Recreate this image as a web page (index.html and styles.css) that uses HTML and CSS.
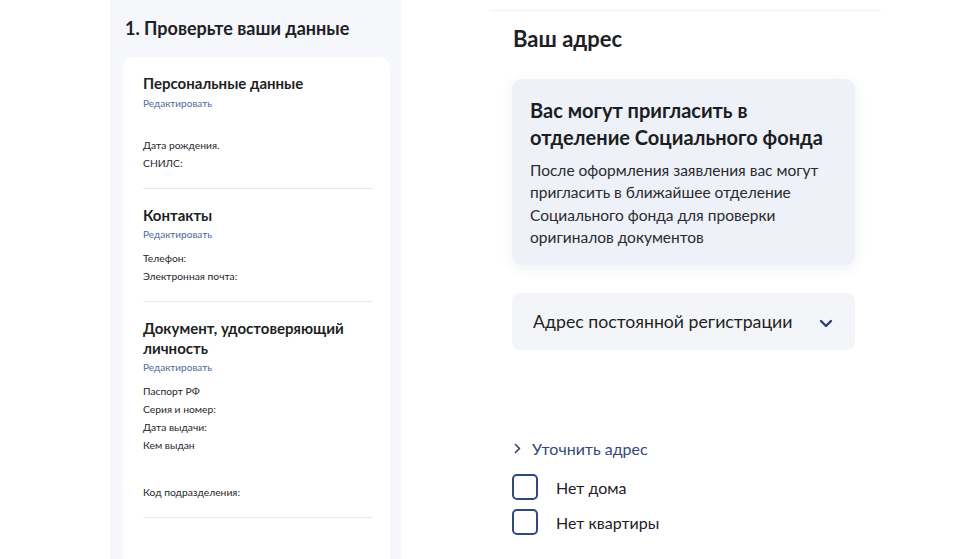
FILE: index.html
```html
<!DOCTYPE html>
<html lang="ru">
<head>
<meta charset="UTF-8">
<title>Проверьте ваши данные</title>
<link rel="stylesheet" href="styles.css">
</head>
<body>
<div class="page">
    <div class="left">
        <h1 class="step-title">1. Проверьте ваши данные</h1>
        <div class="card">
            <div class="sec">
                <h2 class="sec-title">Персональные данные</h2>
                <a class="edit">Редактировать</a>
                <div class="fields first">
                    <p>Дата рождения.</p>
                    <p>СНИЛС:</p>
                </div>
            </div>
            <div class="sec">
                <h2 class="sec-title">Контакты</h2>
                <a class="edit">Редактировать</a>
                <div class="fields">
                    <p>Телефон:</p>
                    <p>Электронная почта:</p>
                </div>
            </div>
            <div class="sec">
                <h2 class="sec-title">Документ, удостоверяющий личность</h2>
                <a class="edit">Редактировать</a>
                <div class="fields">
                    <p>Паспорт РФ</p>
                    <p>Серия и номер:</p>
                    <p>Дата выдачи:</p>
                    <p>Кем выдан</p>
                    <p class="code">Код подразделения:</p>
                </div>
            </div>
            <div class="sec last"></div>
        </div>
    </div>
    <div class="right">
        <div class="right-inner">
            <h1 class="addr-title">Ваш адрес</h1>
            <div class="info">
                <h3>Вас могут пригласить в отделение Социального фонда</h3>
                <p>После оформления заявления вас могут пригласить в ближайшее отделение Социального фонда для проверки оригиналов документов</p>
            </div>
            <div class="select">
                <span>Адрес постоянной регистрации</span>
                <svg width="14" height="9" viewBox="0 0 14 9"><path d="M2 2l5 5 5-5" fill="none" stroke="#2c3f73" stroke-width="2.4" stroke-linecap="round" stroke-linejoin="round"/></svg>
            </div>
            <div class="refine">
                <svg width="7" height="11" viewBox="0 0 7 11"><path d="M1.5 1.5l4 4-4 4" fill="none" stroke="#2c3f73" stroke-width="1.6" stroke-linecap="round" stroke-linejoin="round"/></svg>
                <span>Уточнить адрес</span>
            </div>
            <label class="check"><span class="box"></span>Нет дома</label>
            <label class="check"><span class="box"></span>Нет квартиры</label>
        </div>
    </div>
</div>
</body>
</html>
```
FILE: styles.css
```css
*{margin:0;padding:0;box-sizing:border-box;}
body{background:#fff;font-family:Lato,"Noto Sans",sans-serif;color:#1f2026;}
.page{display:flex;height:559px;overflow:hidden;padding-left:110px;}

.left{width:291px;background:#f6f7fb;padding:17px 11px 0 13px;}
.step-title{font-size:18px;font-weight:700;line-height:22px;padding-left:2px;}
.card{margin-top:18px;background:#fff;border-radius:10px;padding:0 17px 0 20px;height:600px;}
.sec{padding:17px 0 16px;border-bottom:1px solid #e6e8ec;}
.sec.last{border:none;}
.sec-title{font-size:15px;font-weight:700;line-height:19.5px;color:#1e1f24;}
.edit{display:block;margin-top:2px;font-size:10px;line-height:14px;color:#4c6a99;}
.fields{margin-top:8px;font-size:10.3px;line-height:18px;color:#26272c;}
.fields.first{margin-top:26px;}
.fields .code{margin-top:29px;}

.right{margin-left:89px;width:391px;padding-top:10px;}
.right-inner{border-top:1px solid #eff1f4;padding:14px 26px 0 22px;height:100%;}
.addr-title{font-size:22px;font-weight:700;line-height:28px;padding-left:1px;}
.info{margin-top:26px;background:#eef1f8;border-radius:10px;padding:18px 18px 17px 18px;box-shadow:0 3px 14px rgba(40,60,110,0.07);}
.info h3{font-size:20px;font-weight:700;line-height:27px;color:#1c1d22;}
.info p{margin-top:8px;font-size:15.5px;line-height:22.3px;color:#2a2b30;}
.select{margin-top:28px;height:57px;background:#f4f5f8;border-radius:8px;display:flex;align-items:center;justify-content:space-between;padding:0 22px 0 21px;font-size:17.7px;color:#1e1f24;}
.select svg{margin-top:4px;}
.refine{margin-top:89px;display:flex;align-items:center;gap:11px;padding-left:2px;font-size:16px;color:#34497a;}
.check{display:flex;align-items:center;margin-top:16px;font-size:16px;color:#1f2026;height:26px;}
.check + .check{margin-top:9px;}
.box{width:26px;height:26px;border:2px solid #2e4883;border-radius:5px;margin-right:18px;}
```
